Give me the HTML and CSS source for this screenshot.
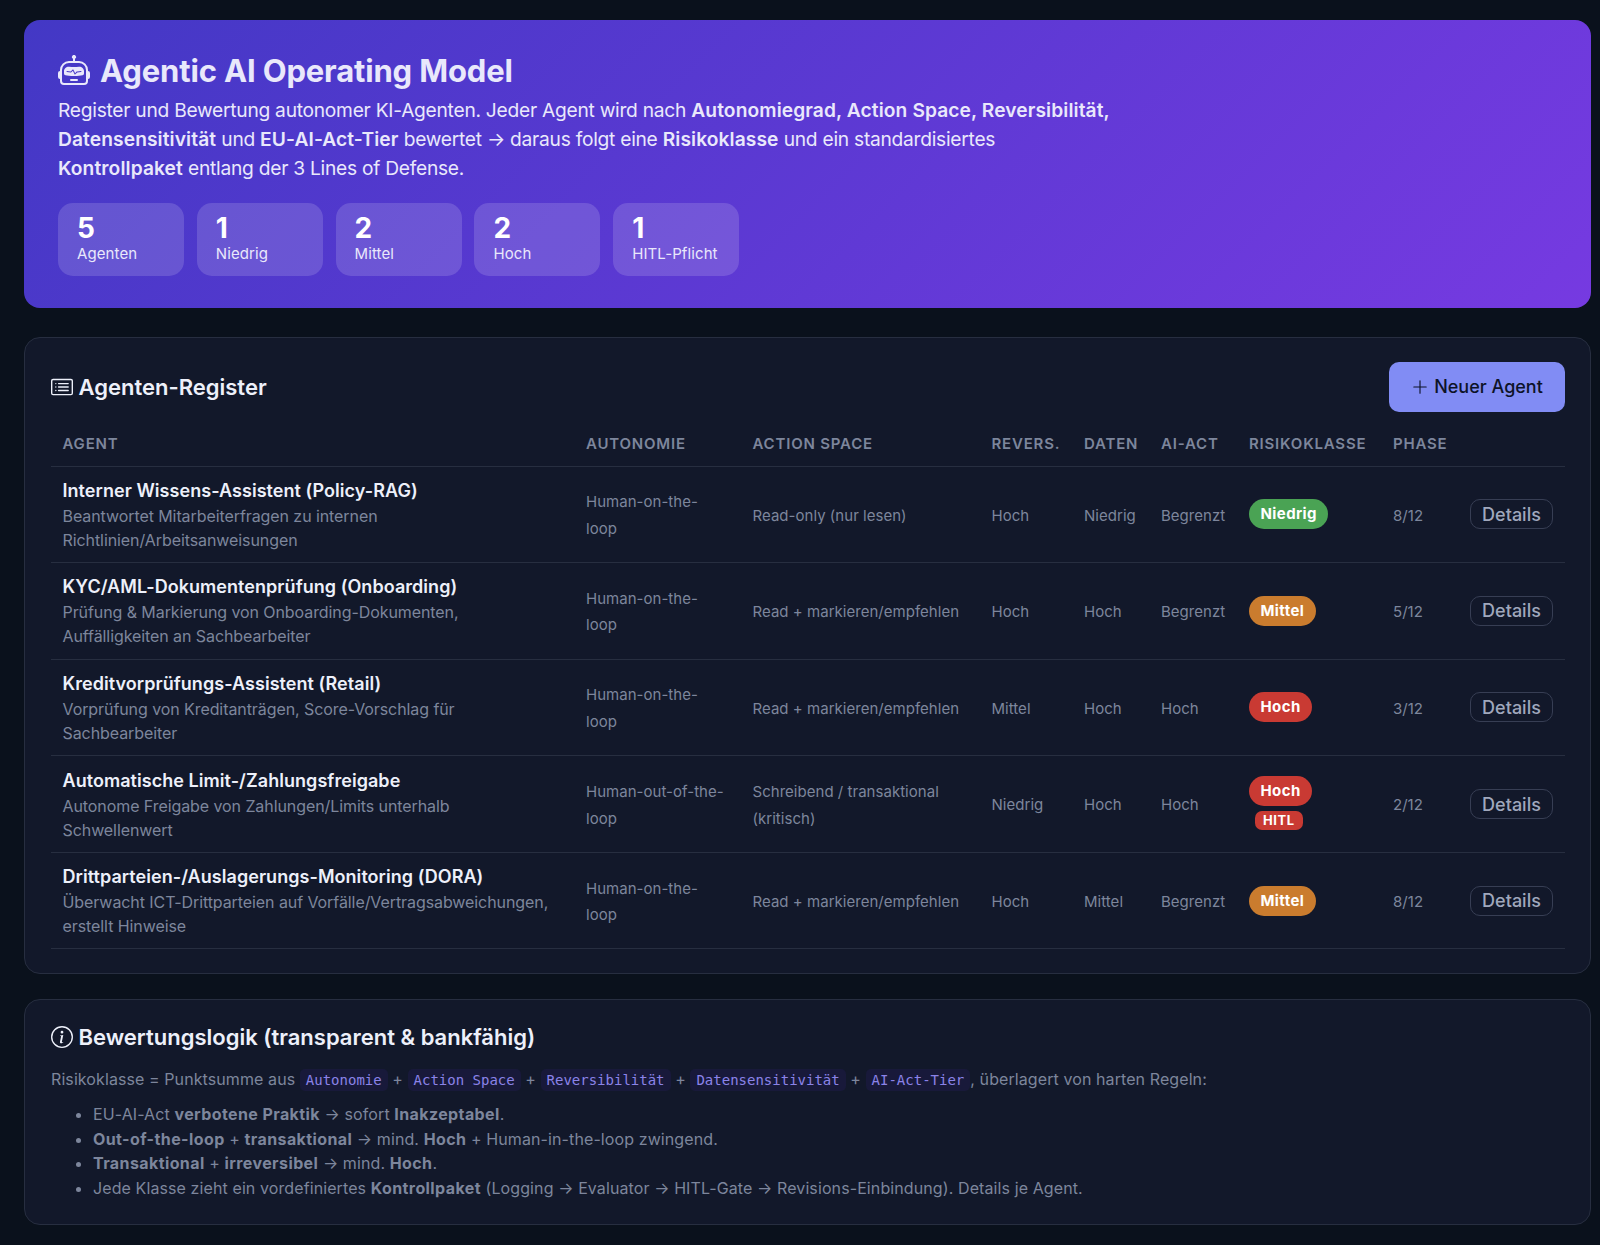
FILE: index.html
```html
<!DOCTYPE html>
<html lang="de">

<head>
  <meta charset="UTF-8">
  <link rel="stylesheet" href="styles.css">
  <title>Agentic AI Operating Model</title>
</head>

<body>

<header class="hero">
  <h1>
    <svg class="icon" viewBox="0 0 16 16"><path d="M6 12.5a.5.5 0 0 1 .5-.5h3a.5.5 0 0 1 0 1h-3a.5.5 0 0 1-.5-.5ZM3 8.062C3 6.76 4.235 5.765 5.53 5.886a26.58 26.58 0 0 0 4.94 0C11.765 5.765 13 6.76 13 8.062v1.157a.933.933 0 0 1-.765.935c-.845.147-2.34.346-4.235.346-1.895 0-3.39-.2-4.235-.346A.933.933 0 0 1 3 9.219V8.062Zm4.542-.827a.25.25 0 0 0-.217.068l-.92.9a24.767 24.767 0 0 1-1.871-.183.25.25 0 0 0-.068.495c.55.076 1.232.149 2.02.193a.25.25 0 0 0 .189-.071l.754-.736.847 1.71a.25.25 0 0 0 .404.062l.932-.97a25.286 25.286 0 0 0 1.922-.188.25.25 0 0 0-.068-.495c-.538.074-1.207.145-1.98.189a.25.25 0 0 0-.166.076l-.754.785-.842-1.7a.25.25 0 0 0-.182-.135Z"/><path d="M8.5 1.866a1 1 0 1 0-1 0V3h-2A4.5 4.5 0 0 0 1 7.5V8a1 1 0 0 0-1 1v2a1 1 0 0 0 1 1v1a2 2 0 0 0 2 2h10a2 2 0 0 0 2-2v-1a1 1 0 0 0 1-1V9a1 1 0 0 0-1-1v-.5A4.5 4.5 0 0 0 10.5 3h-2V1.866ZM14 7.5V13a1 1 0 0 1-1 1H3a1 1 0 0 1-1-1V7.5A3.5 3.5 0 0 1 5.5 4h5A3.5 3.5 0 0 1 14 7.5Z"/></svg>
    <span>Agentic AI Operating Model</span>
  </h1>
  <p class="lead">Register und Bewertung autonomer KI-Agenten. Jeder Agent wird nach <b>Autonomiegrad, Action Space, Reversibilität, Datensensitivität</b> und <b>EU-AI-Act-Tier</b> bewertet → daraus folgt eine <b>Risikoklasse</b> und ein standardisiertes <b>Kontrollpaket</b> entlang der 3 Lines of Defense.</p>
  <div class="stats">
    <div class="stat"><div class="num">5</div><div class="lbl">Agenten</div></div>
    <div class="stat"><div class="num">1</div><div class="lbl">Niedrig</div></div>
    <div class="stat"><div class="num">2</div><div class="lbl">Mittel</div></div>
    <div class="stat"><div class="num">2</div><div class="lbl">Hoch</div></div>
    <div class="stat"><div class="num">1</div><div class="lbl">HITL-Pflicht</div></div>
  </div>
</header>

<section class="card register">
  <div class="card-head">
    <h2>
      <svg class="icon" viewBox="0 0 16 16"><path d="M14.5 3a.5.5 0 0 1 .5.5v9a.5.5 0 0 1-.5.5h-13a.5.5 0 0 1-.5-.5v-9a.5.5 0 0 1 .5-.5zm-13-1A1.5 1.5 0 0 0 0 3.5v9A1.5 1.5 0 0 0 1.5 14h13a1.5 1.5 0 0 0 1.5-1.5v-9A1.5 1.5 0 0 0 14.5 2z"/><path d="M5 8a.5.5 0 0 1 .5-.5h7a.5.5 0 0 1 0 1h-7A.5.5 0 0 1 5 8m0-2.5a.5.5 0 0 1 .5-.5h7a.5.5 0 0 1 0 1h-7a.5.5 0 0 1-.5-.5m0 5a.5.5 0 0 1 .5-.5h7a.5.5 0 0 1 0 1h-7a.5.5 0 0 1-.5-.5m-1-5a.5.5 0 1 1-1 0 .5.5 0 0 1 1 0M4 8a.5.5 0 1 1-1 0 .5.5 0 0 1 1 0m0 2.5a.5.5 0 1 1-1 0 .5.5 0 0 1 1 0"/></svg>
      <span>Agenten-Register</span>
    </h2>
    <button class="btn-new">
      <svg class="icon" viewBox="0 0 16 16"><path d="M8 2a.5.5 0 0 1 .5.5v5h5a.5.5 0 0 1 0 1h-5v5a.5.5 0 0 1-1 0v-5h-5a.5.5 0 0 1 0-1h5v-5A.5.5 0 0 1 8 2"/></svg>
      <span>Neuer Agent</span>
    </button>
  </div>
  <table>
    <colgroup>
      <col class="c-agent"><col class="c-auto"><col class="c-space"><col class="c-rev"><col class="c-data"><col class="c-act"><col class="c-risk"><col class="c-phase"><col>
    </colgroup>
    <thead>
      <tr><th>Agent</th><th>Autonomie</th><th>Action Space</th><th>Revers.</th><th>Daten</th><th>AI-Act</th><th>Risikoklasse</th><th>Phase</th><th></th></tr>
    </thead>
    <tbody>
      <tr>
        <td><div class="name">Interner Wissens-Assistent (Policy-RAG)</div><div class="desc">Beantwortet Mitarbeiterfragen zu internen<br>Richtlinien/Arbeitsanweisungen</div></td>
        <td class="val">Human-on-the-<br>loop</td>
        <td class="val">Read-only (nur lesen)</td>
        <td class="val">Hoch</td>
        <td class="val">Niedrig</td>
        <td class="val">Begrenzt</td>
        <td><span class="pill low">Niedrig</span></td>
        <td class="val">8/12</td>
        <td><button class="btn-details">Details</button></td>
      </tr>
      <tr>
        <td><div class="name">KYC/AML-Dokumentenprüfung (Onboarding)</div><div class="desc">Prüfung &amp; Markierung von Onboarding-Dokumenten,<br>Auffälligkeiten an Sachbearbeiter</div></td>
        <td class="val">Human-on-the-<br>loop</td>
        <td class="val">Read + markieren/empfehlen</td>
        <td class="val">Hoch</td>
        <td class="val">Hoch</td>
        <td class="val">Begrenzt</td>
        <td><span class="pill mid">Mittel</span></td>
        <td class="val">5/12</td>
        <td><button class="btn-details">Details</button></td>
      </tr>
      <tr>
        <td><div class="name">Kreditvorprüfungs-Assistent (Retail)</div><div class="desc">Vorprüfung von Kreditanträgen, Score-Vorschlag für<br>Sachbearbeiter</div></td>
        <td class="val">Human-on-the-<br>loop</td>
        <td class="val">Read + markieren/empfehlen</td>
        <td class="val">Mittel</td>
        <td class="val">Hoch</td>
        <td class="val">Hoch</td>
        <td><span class="pill high">Hoch</span></td>
        <td class="val">3/12</td>
        <td><button class="btn-details">Details</button></td>
      </tr>
      <tr>
        <td><div class="name">Automatische Limit-/Zahlungsfreigabe</div><div class="desc">Autonome Freigabe von Zahlungen/Limits unterhalb<br>Schwellenwert</div></td>
        <td class="val">Human-out-of-the-<br>loop</td>
        <td class="val">Schreibend / transaktional<br>(kritisch)</td>
        <td class="val">Niedrig</td>
        <td class="val">Hoch</td>
        <td class="val">Hoch</td>
        <td><span class="pill high">Hoch</span><span class="hitl">HITL</span></td>
        <td class="val">2/12</td>
        <td><button class="btn-details">Details</button></td>
      </tr>
      <tr>
        <td><div class="name">Drittparteien-/Auslagerungs-Monitoring (DORA)</div><div class="desc">Überwacht ICT-Drittparteien auf Vorfälle/Vertragsabweichungen,<br>erstellt Hinweise</div></td>
        <td class="val">Human-on-the-<br>loop</td>
        <td class="val">Read + markieren/empfehlen</td>
        <td class="val">Hoch</td>
        <td class="val">Mittel</td>
        <td class="val">Begrenzt</td>
        <td><span class="pill mid">Mittel</span></td>
        <td class="val">8/12</td>
        <td><button class="btn-details">Details</button></td>
      </tr>
    </tbody>
  </table>
</section>

<section class="card logic">
  <h2>
    <svg class="icon" viewBox="0 0 16 16"><path d="M8 15A7 7 0 1 1 8 1a7 7 0 0 1 0 14m0 1A8 8 0 1 0 8 0a8 8 0 0 0 0 16"/><path d="m8.93 6.588-2.29.287-.082.38.45.083c.294.07.352.176.288.469l-.738 3.468c-.194.897.105 1.319.808 1.319.545 0 1.178-.252 1.465-.598l.088-.416c-.2.176-.492.246-.686.246-.275 0-.375-.193-.304-.533zM9 4.5a1 1 0 1 1-2 0 1 1 0 0 1 2 0"/></svg>
    <span>Bewertungslogik (transparent &amp; bankfähig)</span>
  </h2>
  <p>Risikoklasse = Punktsumme aus <code>Autonomie</code> + <code>Action Space</code> + <code>Reversibilität</code> + <code>Datensensitivität</code> + <code>AI-Act-Tier</code>, überlagert von harten Regeln:</p>
  <ul>
    <li>EU-AI-Act <b>verbotene Praktik</b> → sofort <b>Inakzeptabel</b>.</li>
    <li><b>Out-of-the-loop</b> + <b>transaktional</b> → mind. <b>Hoch</b> + Human-in-the-loop zwingend.</li>
    <li><b>Transaktional</b> + <b>irreversibel</b> → mind. <b>Hoch</b>.</li>
    <li>Jede Klasse zieht ein vordefiniertes <b>Kontrollpaket</b> (Logging → Evaluator → HITL-Gate → Revisions-Einbindung). Details je Agent.</li>
  </ul>
</section>

</body>
</html>
```

FILE: styles.css
```css
* {
    box-sizing: border-box;
}

body {
    margin: 0;
    padding: 20px 9px 20px 24px;
    background: #0a111c;
    color: #7d869c;
    font-family: Inter, "Liberation Sans", sans-serif;
    font-size: 16px;
}

h1, h2, p, ul {
    margin: 0;
}

b {
    font-weight: 600;
}

.icon {
    width: 1em;
    height: 1em;
    fill: currentColor;
    flex: none;
}

button {
    font-family: inherit;
    cursor: pointer;
}

/* Hero */
.hero {
    height: 288px;
    padding: 34px;
    border-radius: 16px;
    background: linear-gradient(135deg, #4338c5, #763ae1);
    color: #e9e8fb;
}

h1 {
    display: flex;
    align-items: center;
    gap: 10px;
    height: 34px;
    font-size: 31px;
    font-weight: 700;
    letter-spacing: -0.15px;
    line-height: 36px;
}

h1 .icon {
    width: 32px;
    height: 32px;
}

.lead {
    max-width: 1064px;
    margin-top: 7.5px;
    font-size: 19.2px;
    letter-spacing: -0.26px;
    line-height: 29px;
}

.lead b {
    letter-spacing: 0.1px;
}

.stats {
    display: flex;
    gap: 12.8px;
    margin-top: 20.5px;
}

.stat {
    width: 126px;
    height: 73px;
    padding: 11px 19px;
    border-radius: 15px;
    background: rgba(255, 255, 255, 0.15);
}

.num {
    color: #fff;
    font-size: 28px;
    font-weight: 700;
    line-height: 28px;
}

.lbl {
    margin-top: 2px;
    font-size: 15px;
    letter-spacing: 0.1px;
    line-height: 20px;
}

/* Cards */
.card {
    border: 1px solid #272e40;
    border-radius: 16px;
    background: #12182a;
    padding: 24px 25px 24px 26px;
}

h2 {
    display: flex;
    align-items: center;
    gap: 5.5px;
    color: #edf0fa;
    font-size: 22px;
    font-weight: 600;
}

.register {
    height: 637px;
    margin-top: 29px;
}

.card-head {
    display: flex;
    align-items: center;
    justify-content: space-between;
}

.btn-new {
    display: flex;
    align-items: center;
    justify-content: center;
    gap: 5px;
    width: 176px;
    height: 50px;
    padding-bottom: 2px;
    border: none;
    border-radius: 10px;
    background: #818cf4;
    color: #0d1327;
    font-size: 18px;
    font-weight: 500;
}

/* Table */
table {
    width: 100%;
    margin-top: 7px;
    border-collapse: collapse;
    table-layout: fixed;
}

.c-agent { width: 523.5px; }
.c-auto { width: 166.5px; }
.c-space { width: 239px; }
.c-rev { width: 92.5px; }
.c-data { width: 77px; }
.c-act { width: 88px; }
.c-risk { width: 144px; }
.c-phase { width: 77px; }

th {
    height: 47px;
    padding: 2px 0 0 11.5px;
    border-bottom: 1px solid #272e40;
    color: #7d869c;
    font-size: 15px;
    font-weight: 600;
    letter-spacing: 0.8px;
    text-align: left;
    text-transform: uppercase;
    white-space: nowrap;
}

td {
    height: 96.6px;
    padding: 0 0 0 11.5px;
    border-bottom: 1px solid #272e40;
    font-size: 15px;
    line-height: 26.5px;
    white-space: nowrap;
}

.val {
    padding-top: 3px;
    letter-spacing: 0.03px;
}

.name {
    color: #edf0fa;
    font-size: 18px;
    font-weight: 600;
    letter-spacing: 0.05px;
    line-height: 27px;
}

.desc {
    font-size: 16px;
    letter-spacing: -0.08px;
    line-height: 24px;
}

.pill {
    display: block;
    width: fit-content;
    padding: 0 11.5px;
    border-radius: 15px;
    color: #fff;
    font-size: 15px;
    font-weight: 700;
    letter-spacing: 0.4px;
    line-height: 30px;
}

.low { background: #4aa354; }
.mid { background: #ca7c2e; }
.high { background: #c93a33; }

.hitl {
    display: block;
    width: fit-content;
    margin: 5px 0 2px 6px;
    padding: 0 8px;
    border-radius: 7px;
    background: #c93a33;
    color: #fff;
    font-size: 13px;
    font-weight: 700;
    letter-spacing: 0.6px;
    line-height: 19px;
}

.btn-details {
    display: block;
    width: 83px;
    height: 30px;
    padding: 0;
    border: 1px solid #373e54;
    border-radius: 10px;
    background: none;
    color: #a0a8bd;
    font-size: 18px;
    font-weight: 500;
}

/* Logic */
.logic {
    height: 226px;
    margin-top: 25px;
}

.logic p {
    margin-top: 14px;
    font-size: 16px;
    letter-spacing: 0.09px;
    line-height: 30px;
}

code {
    padding: 3px 6px;
    border-radius: 5px;
    background: #18193a;
    color: #8b83e8;
    font-family: "DejaVu Sans Mono", monospace;
    font-size: 14px;
    letter-spacing: 0;
}

.logic ul {
    margin-top: 7px;
    padding-left: 42px;
    letter-spacing: 0.1px;
    line-height: 24.6px;
}

.logic li::marker {
    font-size: 17px;
}

.logic li b {
    font-weight: 700;
    letter-spacing: 0.4px;
}
```
